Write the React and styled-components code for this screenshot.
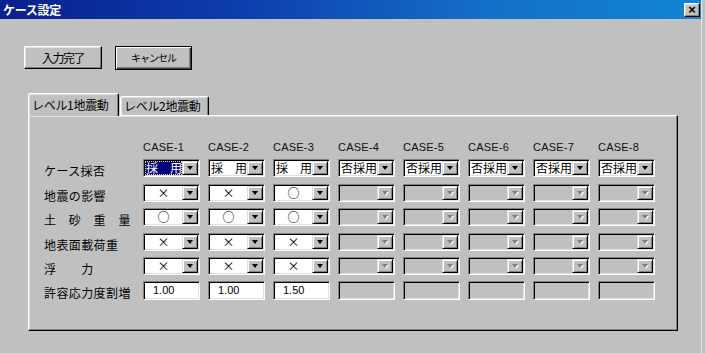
import styled, { createGlobalStyle } from "styled-components";

const GlobalStyle = createGlobalStyle`
	html, body {
		margin: 0;
		padding: 0;
		background: #c0c0c0;
	}
	body {
		font-family: "Noto Sans CJK JP", "Liberation Sans", sans-serif;
		font-size: 12px;
		color: #000;
	}
	* {
		box-sizing: border-box;
	}
`;

const Screen = styled.div`
	width: 705px;
	height: 353px;
	background: #c0c0c0;
	overflow: hidden;
`;

const Window = styled.div`
	width: 702px;
	height: 353px;
	border-right: 1px solid #e4e4e4;
	display: flex;
	flex-direction: column;
`;

const TitleBar = styled.div`
	height: 19px;
	flex: none;
	display: flex;
	align-items: center;
	justify-content: space-between;
	padding: 0 1px 0 3px;
	background: linear-gradient(90deg, #0a1f8e 0%, #0d3fae 35%, #1470c8 70%, #1184d2 100%);
`;

const Title = styled.span`
	color: #fff;
	font-weight: bold;
	font-size: 12px;
	line-height: 19px;
	letter-spacing: -0.3px;
`;

const CloseButton = styled.div`
	width: 16px;
	height: 14px;
	background: #c0c0c0;
	border: 1px solid;
	border-color: #fff #000 #000 #fff;
	box-shadow: inset -1px -1px #808080, inset 1px 1px #dfdfdf;
	display: flex;
	align-items: center;
	justify-content: center;
	font-family: "Liberation Sans", sans-serif;
	font-weight: bold;
	font-size: 13px;
	line-height: 10px;
`;

const Body = styled.div`
	padding: 27px 0 0 24px;
`;

const ButtonRow = styled.div`
	display: flex;
	gap: 13px;
	align-items: flex-start;
`;

// 3D風ボタン、$default で黒枠
const Button = styled.div`
	width: ${(p) => p.$w}px;
	height: ${(p) => (p.$default ? 24 : 23)}px;
	background: #c0c0c0;
	border: 1px solid;
	border-color: ${(p) => (p.$default ? "#000" : "#fff #000 #000 #fff")};
	box-shadow: ${(p) =>
		p.$default
			? "inset 1px 1px #fff, inset -1px -1px #404040, inset -2px -2px #808080"
			: "inset -1px -1px #808080, inset 1px 1px #dfdfdf"};
	display: flex;
	align-items: center;
	justify-content: center;
	font-size: ${(p) => p.$size || 12}px;
	letter-spacing: ${(p) => p.$spacing || 0}px;
	line-height: 1;
`;

const TabStrip = styled.div`
	margin: 23px 0 0 4px;
	display: flex;
	align-items: flex-end;
	gap: 1px;
`;

const Tab = styled.div`
	width: ${(p) => p.$w}px;
	height: ${(p) => (p.$active ? 23 : 19)}px;
	margin-bottom: ${(p) => (p.$active ? -1 : 0)}px;
	position: relative;
	z-index: ${(p) => (p.$active ? 1 : 0)};
	background: #c0c0c0;
	border: 1px solid;
	border-bottom: none;
	border-color: #fff #000 transparent #fff;
	border-radius: 2px 2px 0 0;
	box-shadow: inset -1px 0 #808080, inset 1px 1px #dfdfdf;
	padding: ${(p) => (p.$active ? "3px 0 0 3px" : "1px 0 0 3px")};
	font-size: 12px;
	line-height: 16px;
	letter-spacing: -0.3px;
	white-space: nowrap;
`;

const Panel = styled.div`
	margin-left: 4px;
	width: 650px;
	height: 216px;
	border: 1px solid;
	border-color: #fff #000 #000 #fff;
	box-shadow: inset -1px -1px #808080, inset 1px 1px #dfdfdf;
	padding: 25px 0 0 15px;
`;

const Grid = styled.div`
	display: grid;
	grid-template-columns: 91px repeat(8, 57px);
	grid-template-rows: 12px repeat(6, 18px);
	column-gap: 8px;
	row-gap: 6.4px;
`;

const CaseHead = styled.div`
	font-family: "Liberation Sans", sans-serif;
	font-size: 11px;
	line-height: 12px;
	letter-spacing: 0.2px;
	color: #111;
`;

const RowLabel = styled.div`
	font-size: 12px;
	line-height: 12px;
	padding-top: 6px;
	letter-spacing: 0.4px;
	white-space: pre;
`;

const Sunken = styled.div`
	height: 18px;
	border: 1px solid;
	border-color: #808080 #fff #fff #808080;
	box-shadow: inset 1px 1px #000, inset -1px -1px #dfdfdf;
	background: ${(p) => (p.$disabled ? "#c0c0c0" : "#fff")};
	padding: 1px;
`;

const Combo = styled(Sunken)`
	display: flex;
`;

const ComboText = styled.div`
	flex: 1;
	min-width: 0;
	white-space: nowrap;
	font-size: 12px;
	line-height: 14px;
	text-align: ${(p) => p.$align};
	padding-left: ${(p) => (p.$align === "left" ? 1 : 0)}px;
	background: ${(p) => (p.$selected ? "#000080" : "transparent")};
	color: ${(p) => (p.$selected ? "#fff" : "#000")};
	outline: ${(p) => (p.$selected ? "1px dotted #e8e070" : "none")};
	outline-offset: -1px;
`;

const DropButton = styled.div`
	width: 16px;
	height: 14px;
	flex: none;
	background: #c0c0c0;
	border: 1px solid;
	border-color: #dfdfdf #000 #000 #dfdfdf;
	box-shadow: inset 1px 1px #fff, inset -1px -1px #808080;
	display: flex;
	align-items: center;
	justify-content: center;
`;

const Arrow = styled.span`
	width: 0;
	height: 0;
	border-left: 3.5px solid transparent;
	border-right: 3.5px solid transparent;
	border-top: 4px solid ${(p) => (p.$disabled ? "#808080" : "#000")};
	filter: ${(p) => (p.$disabled ? "drop-shadow(1px 1px 0 #fff)" : "none")};
`;

const TextField = styled(Sunken)`
	height: 19px;
	font-family: "Liberation Sans", sans-serif;
	font-size: 11px;
	line-height: 14px;
	padding-left: 9px;
`;

const cases = [1, 2, 3, 4, 5, 6, 7, 8];

const rows = [
	{
		label: "ケース採否",
		kind: "combo",
		align: "left",
		values: ["採　用", "採　用", "採　用", "否採用", "否採用", "否採用", "否採用", "否採用"],
	},
	{ label: "地震の影響", kind: "combo", align: "center", values: ["×", "×", "○"] },
	{ label: "土　砂　重　量", kind: "combo", align: "center", values: ["○", "○", "○"] },
	{ label: "地表面載荷重", kind: "combo", align: "center", values: ["×", "×", "×"] },
	{ label: "浮　　力", kind: "combo", align: "center", values: ["×", "×", "×"] },
	{ label: "許容応力度割増", kind: "text", values: ["1.00", "1.00", "1.50"] },
];

const Cell = ({ row, index, value }) => {
	const disabled = value === undefined;
	if (row.kind === "text") {
		return <TextField $disabled={disabled}>{value}</TextField>;
	}
	return (
		<Combo $disabled={disabled}>
			<ComboText $align={row.align} $selected={row.align === "left" && index === 0}>
				{value}
			</ComboText>
			<DropButton>
				<Arrow $disabled={disabled} />
			</DropButton>
		</Combo>
	);
};

export default function App() {
	return (
		<Screen>
			<GlobalStyle />
			<Window>
				<TitleBar>
					<Title>ケース設定</Title>
					<CloseButton>×</CloseButton>
				</TitleBar>
				<Body>
					<ButtonRow>
						<Button $w={78} $spacing={-1.5}>
							入力完了
						</Button>
						<Button $w={77} $default $size={10} $spacing={-1}>
							キャンセル
						</Button>
					</ButtonRow>
					<TabStrip>
						<Tab $w={91} $active>
							レベル1地震動
						</Tab>
						<Tab $w={89}>レベル2地震動</Tab>
					</TabStrip>
					<Panel>
						<Grid>
							<div />
							{cases.map((n) => (
								<CaseHead key={n}>CASE-{n}</CaseHead>
							))}
							{rows.map((row) => [
								<RowLabel key={row.label}>{row.label}</RowLabel>,
								...cases.map((n, i) => (
									<Cell key={row.label + n} row={row} index={i} value={row.values[i]} />
								)),
							])}
						</Grid>
					</Panel>
				</Body>
			</Window>
		</Screen>
	);
}
